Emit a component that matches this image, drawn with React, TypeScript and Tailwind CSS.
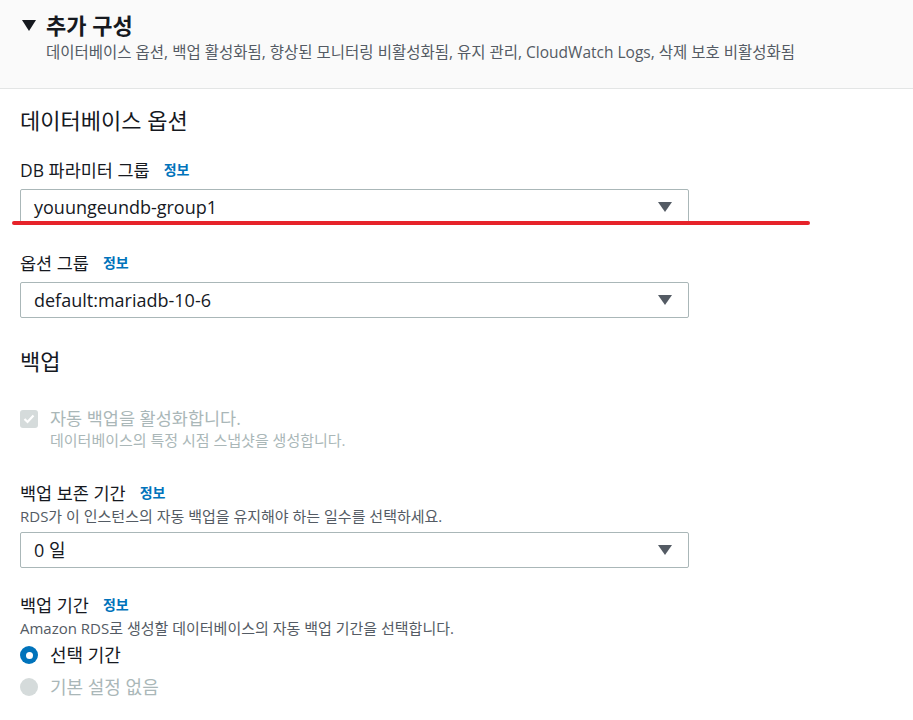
import React from "react";

function Info() {
  return <span className="ml-[14px] text-[14px] font-bold text-[#0073bb]">정보</span>;
}

function Caret() {
  return (
    <svg width="14" height="10" viewBox="0 0 14 10" className="shrink-0">
      <path d="M0 0h14L7 10z" fill="#545b64" />
    </svg>
  );
}

function Select({ value, underline }: { value: string; underline?: boolean }) {
  return (
    <div className="relative w-[669px]">
      <div className="flex h-[36px] items-center justify-between rounded-[2px] border border-[#aab7b8] bg-white pl-[13px] pr-[16px] text-[18px] text-[#16191f]">
        <span>{value}</span>
        <Caret />
      </div>
      {underline && (
        <div className="absolute left-[-8px] top-[32px] h-[4px] w-[798px] rounded-full bg-[#e6232a]" />
      )}
    </div>
  );
}

function Label({ text }: { text: string }) {
  return (
    <div className="flex h-[22px] items-center text-[17.5px] leading-[22px] text-[#16191f]">
      {text}
      <Info />
    </div>
  );
}

export default function App() {
  return (
    <div
      className="min-h-[720px] w-[913px] bg-white"
      style={{ fontFamily: '"Open Sans", "Noto Sans CJK KR", sans-serif' }}
    >
      <div className="h-[89px] border-b border-[#e3e5e5] bg-[#fafafa] pl-[22px] pt-[10px]">
        <div className="flex h-[30px] items-center gap-[10px]">
          <svg width="14" height="11" viewBox="0 0 14 11">
            <path d="M0 0h14L7 11z" fill="#16191f" />
          </svg>
          <span className="text-[22px] font-bold leading-[30px] text-[#16191f]">추가 구성</span>
        </div>
        <div className="mt-[2px] pl-[24px] text-[15.5px] leading-[20px] text-[#545b64]">
          데이터베이스 옵션, 백업 활성화됨, 향상된 모니터링 비활성화됨, 유지 관리, CloudWatch Logs, 삭제 보호 비활성화됨
        </div>
      </div>

      <div className="px-[20px] text-[#16191f]">
        <div className="pt-[16px] text-[22px] leading-[30px]">데이터베이스 옵션</div>

        <div className="mt-[24px]">
          <Label text="DB 파라미터 그룹" />
          <div className="mt-[8px]">
            <Select value="youungeundb-group1" underline />
          </div>
        </div>

        <div className="mt-[27px]">
          <Label text="옵션 그룹" />
          <div className="mt-[8px]">
            <Select value="default:mariadb-10-6" />
          </div>
        </div>

        <div className="mt-[28px] text-[22px] leading-[30px]">백업</div>

        <div className="mt-[30px] flex gap-[12px]">
          <div className="mt-[4px] flex h-[18px] w-[18px] items-center justify-center rounded-[3px] bg-[#d5dbdb]">
            <svg width="12" height="10" viewBox="0 0 12 10">
              <path d="M1.5 5l3 3 6-6.5" stroke="#fff" strokeWidth="2.2" fill="none" />
            </svg>
          </div>
          <div>
            <div className="text-[17.5px] leading-[24px] text-[#aab7b8]">자동 백업을 활성화합니다.</div>
            <div className="text-[15px] leading-[20px] text-[#aab7b8]">데이터베이스의 특정 시점 스냅샷을 생성합니다.</div>
          </div>
        </div>

        <div className="mt-[32px]">
          <Label text="백업 보존 기간" />
          <div className="mt-[2px] text-[15px] leading-[20px] text-[#545b64]">
            RDS가 이 인스턴스의 자동 백업을 유지해야 하는 일수를 선택하세요.
          </div>
          <div className="mt-[6px]">
            <Select value="0 일" />
          </div>
        </div>

        <div className="mt-[26px]">
          <Label text="백업 기간" />
          <div className="mt-[2px] text-[15px] leading-[20px] text-[#545b64]">
            Amazon RDS로 생성할 데이터베이스의 자동 백업 기간을 선택합니다.
          </div>
          <div className="mt-[5px] flex h-[24px] items-center gap-[12px]">
            <div className="flex h-[18px] w-[18px] items-center justify-center rounded-full bg-[#0073bb]">
              <div className="h-[7px] w-[7px] rounded-full bg-white" />
            </div>
            <span className="text-[18px] leading-[24px]">선택 기간</span>
          </div>
          <div className="mt-[8px] flex h-[24px] items-center gap-[12px]">
            <div className="h-[18px] w-[18px] rounded-full bg-[#d5dbdb]" />
            <span className="text-[18px] leading-[24px] text-[#aab7b8]">기본 설정 없음</span>
          </div>
        </div>
      </div>
    </div>
  );
}
